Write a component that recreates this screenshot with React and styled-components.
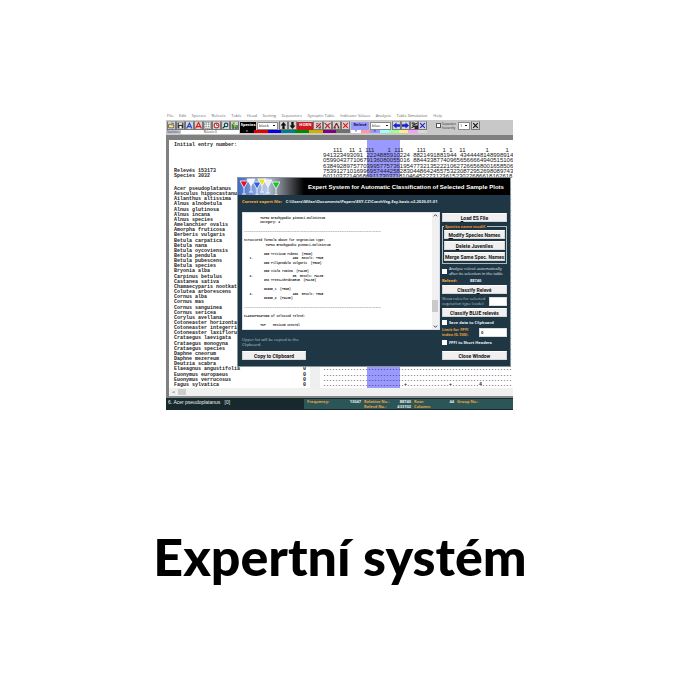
import React from "react";
import styled, { createGlobalStyle } from "styled-components";

const Global = createGlobalStyle`
  * { box-sizing: border-box; }
  body { margin: 0; background: #fff; }
  button, select, input { font: inherit; margin: 0; padding: 0; border-radius: 0; }
`;

const navy = "#1f3745";
const amber = "#f0a33c";

const Slide = styled.main`
  display: flex;
  flex-direction: column;
  align-items: center;
  min-height: 100vh;
  padding-top: 110px;
`;

const Title = styled.h1`
  margin: 112px 0 0;
  font: 900 52px/68px Lato, sans-serif;
  color: #000;
  white-space: nowrap;
`;

const Program = styled.section`
  position: relative;
  display: flex;
  flex-direction: column;
  width: 51%;
  margin-right: 1px;
  overflow: hidden;
  font: 4px/6px "Open Sans", sans-serif;
  white-space: nowrap;
`;

const MenuBar = styled.nav`
  display: flex;
  justify-content: space-between;
  height: 10px;
  padding: 3px 71px 0 1px;
  color: #666;
`;

const MenuLink = styled.a`
  color: inherit;
  text-decoration: none;
`;

const Toolbar = styled.div`
  display: flex;
  gap: 1px;
  height: 15px;
  padding: 1px 0 1px 1px;
  background: #c8c8c8;
`;

const ToolGroup = styled.div`
  display: flex;
  flex-direction: column;
  width: ${(p) => p.$width}px;
`;

const Tools = styled.div`
  display: flex;
  align-items: center;
  height: 9px;
`;

const ToolButton = styled.button`
  display: grid;
  place-items: center;
  flex: 1;
  min-width: 0;
  height: 9px;
  background: #d4d4d4;
  border: 1px solid #777;
  border-top-color: #aaa;
  svg { width: 7px; height: 7px; display: block; }
`;

const Chip = styled.span`
  width: ${(p) => p.$width}px;
  height: 8px;
  background: ${(p) => p.$bg};
  color: ${(p) => p.$fg};
  font-weight: 700;
  text-align: center;
`;

const Select = styled.select`
  appearance: none;
  width: ${(p) => p.$width}px;
  height: 8px;
  margin: 0 1px;
  padding-left: 1px;
  border: 1px solid #888;
  color: #222;
  background: linear-gradient(#222, #222) right 2px center / 2px 1px no-repeat #fff;
`;

const Swatches = styled.div`
  display: flex;
  height: 3px;
`;

const Swatch = styled.span`
  flex: 1;
  background: ${(p) => p.$color};
  color: ${(p) => p.$mark};
  font-size: 4px;
  line-height: 3px;
  text-align: center;
`;

const Statistics = styled.div`
  display: flex;
  gap: 2px;
  height: 4px;
  font-size: 3px;
  line-height: 4px;
  color: #2a2a9a;
  span { flex: 1; background: #fff; color: #222; text-align: center; }
`;

const Hierarchy = styled.label`
  display: flex;
  align-items: center;
  gap: 1px;
  padding: 0 1px 0 8px;
  height: 9px;
  font-size: 3px;
  line-height: 4px;
  color: #222;
`;

const Box = styled.input`
  appearance: none;
  flex: none;
  width: 5px;
  height: 5px;
  background: #fff;
  border: 1px solid ${(p) => p.$line || "#fff"};
`;

const Sheet = styled.div`
  display: flex;
  flex-direction: column;
  height: 253px;
  border-top: 5px solid #808080;
  border-left: 3px solid #808080;
  padding: 3px 0 0 5px;
  background: linear-gradient(90deg, transparent 198px, #9999ff 198px, #9999ff 231px, transparent 231px) #fff;
  font: 700 5px/5px "Liberation Mono", monospace;
  color: #222;
`;

const SheetHead = styled.div`
  display: grid;
  grid-template-columns: 149px 1fr;
  height: 41px;
  flex: none;
`;

const Facts = styled.div`
  display: flex;
  flex-direction: column;
  justify-content: space-between;
  height: 36px;
`;

const Digits = styled.pre`
  display: flex;
  flex-direction: column;
  justify-content: space-between;
  margin: 0;
  height: 36px;
  padding-top: 5px;
  font: 6px/5px "Liberation Sans", sans-serif;
  color: #222;
`;

const SpeciesList = styled.div`
  display: grid;
  grid-auto-rows: 1fr;
  flex: 1;
  min-height: 0;
  padding-top: 3px;
`;

const SpeciesRow = styled.div`
  display: grid;
  grid-template-columns: 129px 7px 10px 3px 1fr;
  min-height: 0;
`;

const Gutter = styled.span`
  background: #efefef;
`;

const ScrollStrip = styled.div`
  display: flex;
  gap: 2px;
  align-items: center;
  height: 10px;
  padding-left: 3px;
  background: #f0f0f0;
  border-left: 3px solid #808080;
  border-bottom: 2px solid #888;
  color: #333;
  font-size: 6px;
  i { width: 8px; height: 6px; background: #cdcdcd; }
`;

const Status = styled.footer`
  display: flex;
  height: 12px;
  padding: 1px 0;
  background: #17292c;
  color: #e8eeee;
`;

const StatusName = styled.span`
  flex: 0 0 138px;
  padding-left: 2px;
  font: 5px/6px "Liberation Sans", sans-serif;
`;

const StatusGrid = styled.dl`
  display: grid;
  grid-template-columns: 37px 20px 30px 20px 24px 19px 1fr;
  grid-auto-rows: 5px;
  flex: 1;
  margin: 0;
  padding: 0 2px;
  background: #2c5558;
  font-weight: 700;
  line-height: 5px;
  dt { color: ${amber}; padding-left: 1px; }
  dd { margin: 0; text-align: right; padding-right: 2px; }
`;

const Dialog = styled.section`
  position: absolute;
  top: 67px;
  right: 2px;
  left: 71px;
  border: 1px solid #8b969c;
  background: ${navy};
  color: #e6eef2;
`;

const DialogBar = styled.header`
  display: flex;
  align-items: center;
  justify-content: space-between;
  height: 17px;
  padding-right: 6px;
  background: linear-gradient(90deg, #3c68c8 0, #b8c8e8 28px, #8a8f98 40px, #000 66px);
  svg { width: 42px; height: 17px; flex: none; }
  h2 { margin: 0; font: 700 6px/10px "Liberation Sans", sans-serif; color: #fff; }
`;

const PathLine = styled.p`
  display: flex;
  gap: 4px;
  margin: 0;
  padding: 4px 4px 7px;
  font-weight: 700;
  b { color: ${amber}; }
`;

const DialogBody = styled.div`
  display: grid;
  grid-template-columns: 1fr 65px;
  gap: 2px;
  padding: 0 3px 6px 4px;
`;

const Side = styled.div`
  display: flex;
  flex-direction: column;
`;

const Log = styled.div`
  display: flex;
  height: 118px;
  background: #fff;
  border: 1px solid #dde;
`;

const LogLines = styled.output`
  display: flex;
  flex-direction: column;
  justify-content: space-between;
  flex: 1;
  min-width: 0;
  padding: 4px 1px 1px;
  overflow: hidden;
  font: 700 3px/4px "Liberation Mono", monospace;
  color: #222;
  white-space: pre;
  span { height: 4px; }
`;

const LogScroll = styled.span`
  display: flex;
  flex-direction: column;
  justify-content: space-between;
  align-items: center;
  width: 7px;
  background: #f0f0f0;
  svg { width: 5px; height: 5px; }
  i { width: 6px; height: 12px; background: #c9c9c9; margin-top: auto; margin-bottom: 12px; }
`;

const Hint = styled.p`
  margin: auto 0 4px;
  color: #b8c4ca;
  line-height: 5px;
`;

const Button = styled.button`
  width: ${(p) => (p.$width ? p.$width + "px" : "100%")};
  height: 9px;
  border: 1px solid #d5d5d5;
  border-top-color: #fff;
  background: #f0f0f0;
  color: #111;
  font: 700 5px/6px Roboto, sans-serif;
  text-align: center;
`;

const Controls = styled.div`
  display: flex;
  flex-direction: column;
  gap: 2px;
  min-width: 0;
  padding-top: 1px;
  > button:last-child { margin-top: 4px; }
`;

const Fieldset = styled.fieldset`
  display: flex;
  flex-direction: column;
  gap: 2px;
  min-width: 0;
  margin: 0;
  padding: 1px 1px 2px;
  border: 1px solid #aebbc0;
  legend { padding: 0 1px; color: #f08a28; font-weight: 700; line-height: 5px; }
`;

const Check = styled.label`
  display: flex;
  align-items: center;
  gap: 2px;
  height: ${(p) => p.$height || 6}px;
  line-height: 5px;
  font-weight: ${(p) => (p.$bold ? 700 : 400)};
`;

const Field = styled.label`
  display: flex;
  justify-content: space-between;
  align-items: center;
  height: 10px;
  line-height: 5px;
  color: ${(p) => (p.$strong ? amber : "#b8c4ca")};
  font-weight: ${(p) => (p.$strong ? 700 : 400)};
  input { width: ${(p) => p.$width}px; height: 9px; border: 1px solid #ddd; background: #fff; color: #222; padding-left: 1px; }
`;

const Pair = styled.div`
  display: grid;
  grid-template-columns: 28px 1fr;
  font-weight: 700;
  line-height: 5px;
  b { color: ${amber}; }
`;

const menus = ["File", "Edit", "Species", "Relevés", "Table", "Head", "Sorting", "Separators", "Synoptic Table", "Indicator Values", "Analysis", "Table Simulation", "Help"];

const glyphs = {
  open: <><path d="M1 4h3l1 1h5v5H1z" fill="#ffe48a" stroke="#222" /><path d="M5 2h4v2" fill="none" stroke="#222" /></>,
  save: <><path d="M1 1h10v10H1z" fill="#333" /><path d="M3 1h6v4H3z" fill="#ddd" /><path d="M4 7h4v4H4z" fill="#fff" /></>,
  fontBlue: <path d="M1 11 6 2l4 9M3 8h6" fill="none" stroke="#2446c8" strokeWidth="2" />,
  fontRed: <path d="M1 11 6 1l5 10M3 8h6" fill="none" stroke="#e01818" strokeWidth="2" />,
  grid: <path d="M1 1h10v10H1zM1 4h10M1 8h10M4 1v10M8 1v10" fill="#fff" stroke="#666" strokeDasharray="2 1" />,
  clock: <><circle cx="6" cy="6" r="4" fill="#fff" stroke="#c33" strokeWidth="2" /><path d="M6 3v3h3" fill="none" stroke="#222" /></>,
  find: <><circle cx="7" cy="5" r="3" fill="#9ff" stroke="#245" strokeWidth="2" /><path d="m5 7-4 4" stroke="#222" strokeWidth="2" /></>,
  chart: <><path d="M2 11V4l3-3v10zM7 11V6h4v5z" fill="#2ea838" stroke="#153" /><path d="m2 2 7 6" stroke="#e5b920" strokeWidth="2" /></>,
  up: <path d="M6 0 1 6h3v6h4V6h3z" fill="#111" />,
  down: <path d="M6 12 1 6h3V0h4v6h3z" fill="#111" />,
  cut: <path d="m2 10 8-8M2 3h4M6 10h4M2 6h2M9 6v3" stroke="#a22" strokeWidth="2" />,
  fork: <path d="m1 2 5 4 5-4M6 6 2 11M6 6l4 5" fill="none" stroke="#b22" strokeWidth="2" />,
  tree: <path d="m6 2-4 8M6 2l4 8M1 10h4M8 10h3" fill="none" stroke="#822" strokeWidth="2" />,
  crossRed: <path d="m2 2 8 8M10 2l-8 8" stroke="#e11" strokeWidth="2" />,
  left: <path d="M0 6l6-5v3h6v4H6v3z" fill="#1122dd" />,
  right: <path d="m12 6-6-5v3H0v4h6v3z" fill="#1122dd" />,
  mix: <path d="M1 2h5M2 6l8-4M1 10l5-3M7 7h4v4H7z" stroke="#222" fill="#333" strokeWidth="2" />,
  crossBlue: <path d="m2 2 8 8M10 2l-8 8" stroke="#22d" strokeWidth="2" />,
  cross: <path d="m2 2 8 8M10 2l-8 8" stroke="#111" strokeWidth="2" />,
};

const Tool = ({ icon }) => (
  <ToolButton aria-label={icon}>
    <svg viewBox="0 0 12 12">{glyphs[icon]}</svg>
  </ToolButton>
);

const speciesColors = ["#000", "#e00000", "#0000e0", "#008080", "#008a00", "#c8b400", "#800080", "#707070"];
const releveColors = ["#fff", "#ff9999", "#9999ff", "#99ffff", "#99ff99", "#ffee88", "#ff99ff", "#d8d8d8"];

const digitRows = [
  "   111  11 1 111    1 111    111     1 1  11      1     1",
  "941323493091 2224885910224 8821491881944 4344448148998914",
  "05990437710679136080055016 884433877409656566664940515106",
  "638492897577039957757361954773213522210627266568001658506",
  "753912710169969574442582830448642455753230872952698089743",
  "601103721406869117303718104645227312361523022686618162618",
].map((row) => row.replaceAll(" ", "\u2007"));

const species = [
  "Acer pseudoplatanus", "Aesculus hippocastanum", "Ailanthus altissima", "Alnus alnobetula", "Alnus glutinosa",
  "Alnus incana", "Alnus species", "Amelanchier ovalis", "Amorpha fruticosa", "Berberis vulgaris", "Betula carpatica",
  "Betula nana", "Betula oycoviensis", "Betula pendula", "Betula pubescens", "Betula species", "Bryonia alba",
  "Carpinus betulus", "Castanea sativa", "Chamaecyparis nootkatensis", "Colutea arborescens", "Cornus alba", "Cornus mas",
  "Cornus sanguinea", "Cornus sericea", "Corylus avellana", "Cotoneaster horizontalis", "Cotoneaster integerrimus",
  "Cotoneaster laxiflorus", "Crataegus laevigata", "Crataegus monogyna", "Crataegus species", "Daphne cneorum",
  "Daphne mezereum", "Deutzia scabra", "Elaeagnus angustifolia", "Euonymus europaeus", "Euonymus verrucosus", "Fagus sylvatica",
];

const dots = ".".repeat(63);
const lastDots = ".".repeat(27) + "+" + ".".repeat(14) + "+" + ".".repeat(9) + "4" + ".".repeat(10);
const rule = "-".repeat(76);

const logLines = [
  "         TUF02 Brachypodio pinnati-Molinietum",
  "         Category: 4",
  "",
  rule,
  "",
  "Structured formula above for vegetation type:",
  "            TUF02 Brachypodio pinnati-Molinietum",
  "",
  "           ### Triticum rubens  (TRUE)",
  "   1.                      AND  Result: TRUE",
  "           ### Filipendula vulgaris  (TRUE)",
  "",
  "           ### Viola rumina  (FALSE)",
  "   2.                      OR  Result: FALSE",
  "           #SC Trees+shrubsGR15  (FALSE)",
  "",
  "           GUIDE_1  (TRUE)",
  "   3.                      AND  Result: TRUE",
  "           GUIDE_2  (FALSE)",
  "",
  rule,
  "",
  "CLASSIFICATION of selected relevé:",
  "",
  "         TUF    Mesicum central",
];

const Glass = ({ x, y, color }) => (
  <g transform={`translate(${x} ${y})`}>
    <path d="M0 0h8L4 7z" fill={color} stroke="#fff" strokeWidth="0.8" />
    <path d="M4 7v6M2 13h4" stroke="#fff" strokeWidth="0.8" />
  </g>
);

export default function App() {
  return (
    <Slide>
      <Global />
      <Program>
        <MenuBar>{menus.map((m) => <MenuLink href="#" key={m}>{m}</MenuLink>)}</MenuBar>
        <Toolbar>
          <ToolGroup $width={72}>
            <Tools>{["open", "save", "fontBlue", "fontRed", "grid", "clock", "find", "chart"].map((i) => <Tool icon={i} key={i} />)}</Tools>
            <Statistics>Statistics<span>Relevés 0</span></Statistics>
          </ToolGroup>
          <ToolGroup $width={110}>
            <Tools>
              <Chip $width={16} $bg="#000" $fg="#fff">Species</Chip>
              <Select $width={21} aria-label="Species colour"><option>black</option></Select>
              <Tool icon="up" /><Tool icon="down" />
              <Chip $width={16} $bg="#d01820" $fg="#fff">HORN</Chip>
              {["cut", "fork", "tree", "crossRed"].map((i) => <Tool icon={i} key={i} />)}
            </Tools>
            <Swatches>{speciesColors.map((c, i) => <Swatch key={c} $color={c} $mark="#fff">{i === 0 ? "*" : ""}</Swatch>)}</Swatches>
          </ToolGroup>
          <ToolGroup $width={76}>
            <Tools>
              <Chip $width={18} $bg="#9999ff" $fg="#114">Relevé</Chip>
              <Select $width={21} aria-label="Relevé colour"><option>blue</option></Select>
              {["left", "right", "mix", "crossBlue"].map((i) => <Tool icon={i} key={i} />)}
            </Tools>
            <Swatches>{releveColors.map((c, i) => <Swatch key={c} $color={c} $mark="#000">{i === 0 || i === 2 ? "*" : ""}</Swatch>)}</Swatches>
          </ToolGroup>
          <ToolGroup $width={52}>
            <Tools>
              <Hierarchy><Box type="checkbox" $line="#555" /><span>Separator<br />hierarchy</span></Hierarchy>
              <Select $width={12} aria-label="Hierarchy level"><option>1</option></Select>
              <Tool icon="cross" />
            </Tools>
          </ToolGroup>
        </Toolbar>
        <Sheet>
          <SheetHead>
            <Facts>
              <span>Initial entry number:</span>
              <span>Relevés 153173<br />Species 3032</span>
            </Facts>
            <Digits>{digitRows.map((r) => <span key={r}>{r}</span>)}</Digits>
          </SheetHead>
          <SpeciesList>
            {species.map((name, i) => (
              <SpeciesRow key={name}>
                <span>{name}</span><span>0</span><Gutter /><span />
                <span>{i === species.length - 1 ? lastDots : dots}</span>
              </SpeciesRow>
            ))}
          </SpeciesList>
        </Sheet>
        <ScrollStrip>&lt;<i /></ScrollStrip>
        <Status>
          <StatusName>6. Acer pseudoplatanus &nbsp; [0]</StatusName>
          <StatusGrid>
            <dt>Frequency:</dt><dd>13047</dd><dt>Relative No.:</dt><dd>88740</dd><dt>Row:</dt><dd>44</dd><dt>Group No.:</dt>
            <dt /><dd /><dt>Relevé No.:</dt><dd>433102</dd><dt>Column:</dt>
          </StatusGrid>
        </Status>

        <Dialog role="dialog" aria-label="Expert System">
          <DialogBar>
            <svg viewBox="0 0 42 17">
              <Glass x={2} y={3} color="#e01020" />
              <Glass x={9} y={1} color="#f4f6fa" />
              <Glass x={15} y={4} color="#2a5fe0" />
              <Glass x={20} y={1} color="#f0e020" />
              <Glass x={26} y={2} color="#e8ecf4" />
              <Glass x={34} y={4} color="#18c030" />
            </svg>
            <h2>Expert System for Automatic Classification of Selected Sample Plots</h2>
          </DialogBar>
          <PathLine>
            <b>Current expert file:</b>
            <span>C:\Users\Milan\Documents\Papers\ESY-CZ\CzechVeg-Esy-basic-v2-2020-01-01</span>
          </PathLine>
          <DialogBody>
            <Side>
              <Log>
                <LogLines>{logLines.map((l, i) => <span key={i}>{l}</span>)}</LogLines>
                <LogScroll>
                  <svg viewBox="0 0 6 6"><path d="m1 4 2-2 2 2" fill="none" stroke="#222" /></svg>
                  <i />
                  <svg viewBox="0 0 6 6"><path d="m1 2 2 2 2-2" fill="none" stroke="#222" /></svg>
                </LogScroll>
              </Log>
              <Hint>Upper list will be copied to the<br />Clipboard.</Hint>
              <Button $width={64}>Copy to Clipboard</Button>
            </Side>
            <Controls>
              <Button><u>L</u>oad ES File</Button>
              <Fieldset>
                <legend>Species name modif.</legend>
                <Button><u>M</u>odify Species Names</Button>
                <Button><u>D</u>elete Juveniles</Button>
                <Button>Merge Same Spec. Names</Button>
              </Fieldset>
              <Check $height={10}><Box type="checkbox" /><span>Analyse relevé automatically<br />after its selection in the table</span></Check>
              <Pair><b>Relevé:</b><span>88740</span></Pair>
              <Button>Classify <u>R</u>elevé</Button>
              <Field $width={18}><span>Show rules for selected<br />vegetation type (code):</span><input /></Field>
              <Button>Classify BLUE relevés</Button>
              <Check $bold><Box type="checkbox" />Save data to Clipboard</Check>
              <Field $width={28} $strong><span>Limit for FPFI<br />index (0-100):</span><input defaultValue="0" /></Field>
              <Check $bold><Box type="checkbox" />FPFI to Short Headers</Check>
              <Button>Close Window</Button>
            </Controls>
          </DialogBody>
        </Dialog>
      </Program>
      <Title>Expertní systém</Title>
    </Slide>
  );
}
